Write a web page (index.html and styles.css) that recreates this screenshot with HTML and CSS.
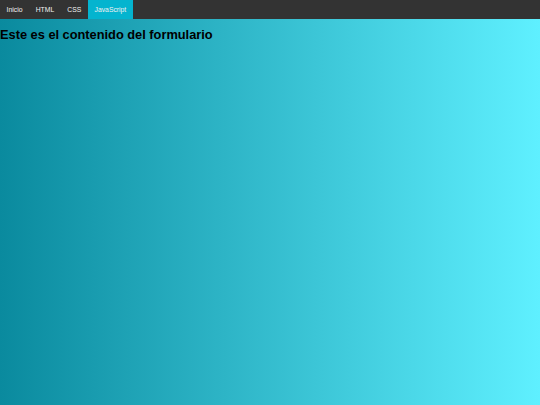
FILE: index.html
```html
<!DOCTYPE html>
<html lang="es">
<head>
<meta charset="utf-8">
<title>Formulario</title>
<link rel="stylesheet" href="styles.css">
</head>
<body>
<nav class="topnav">
  <a class="nav-item" href="#">Inicio</a>
  <a class="nav-item" href="#">HTML</a>
  <a class="nav-item" href="#">CSS</a>
  <a class="nav-item active" href="#">JavaScript</a>
</nav>
<main class="content">
  <h2 class="title">Este es el contenido del formulario</h2>
</main>
</body>
</html>
```
FILE: styles.css
```css
html, body {
  margin: 0;
  padding: 0;
  height: 100%;
}
body {
  font-family: "Liberation Sans", Arial, sans-serif;
  background: linear-gradient(to right, #0a8a9e, #5ff0ff);
  min-height: 405px;
}
.topnav {
  display: flex;
  background: #333333;
  height: 19px;
}
.nav-item {
  display: block;
  color: #f2f2f2;
  text-decoration: none;
  font-size: 6.8px;
  line-height: 19px;
  padding: 0 6.6px;
}
.nav-item.active {
  background: #04b4cf;
}
.content {
  padding: 0;
}
.title {
  margin: 8.4px 0 0;
  font-size: 12.8px;
  font-weight: bold;
  color: #000;
}
```
